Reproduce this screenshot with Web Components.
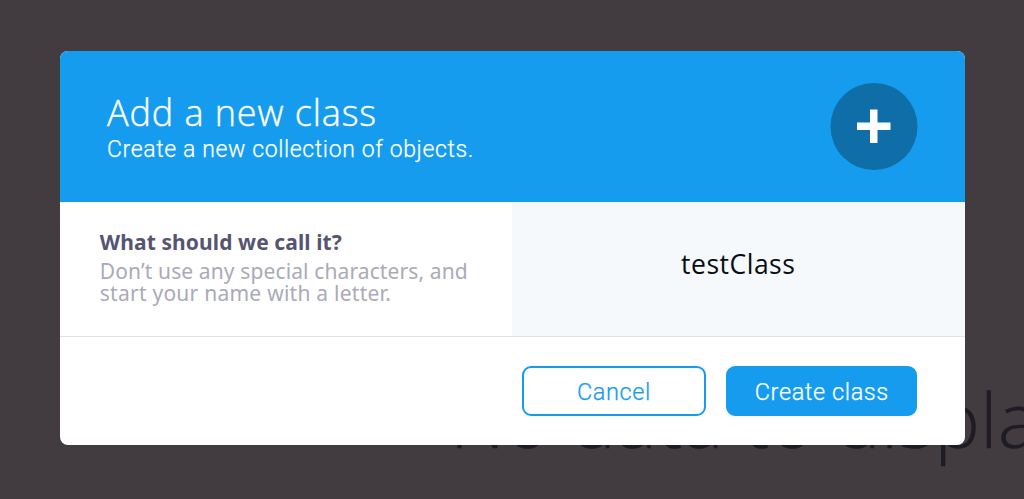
<!DOCTYPE html>
<html lang="en">
<head>
<meta charset="utf-8">
<title>Add a new class</title>
<style>
    body {
        margin: 0;
        height: 499px;
        overflow: hidden;
        background: #423c40;
        font-family: "Open Sans", "Noto Sans", sans-serif;
    }
</style>
</head>
<body>
<modal-backdrop>
    <empty-message slot="behind">No data to display</empty-message>
    <class-modal>
        <modal-header slot="header">
            <span slot="title">Add a new class</span>
            <span slot="subtitle">Create a new collection of objects.</span>
            <plus-badge slot="icon"></plus-badge>
        </modal-header>
        <modal-field>
            <span slot="label">What should we call it?</span>
            <span slot="description">Don’t use any special characters, and</span>
            <span slot="rule">start your name with a letter.</span>
            <span slot="value">testClass</span>
        </modal-field>
        <modal-button slot="actions" style="width: 184px">Cancel</modal-button>
        <modal-button slot="actions" primary style="width: 191px">Create class</modal-button>
    </class-modal>
</modal-backdrop>

<script>
class ModalBackdrop extends HTMLElement {
    connectedCallback() {
        this.attachShadow({mode: 'open'});
        this.shadowRoot.innerHTML = /*html*/`
            <style>
                :host {
                    display: block;
                    position: relative;
                    box-sizing: border-box;
                    height: 499px;
                    padding: 51px 59.5px 0;
                    overflow: hidden;
                }
            </style>
            <slot name="behind"></slot>
            <slot></slot>
        `;
    }
}

class EmptyMessage extends HTMLElement {
    connectedCallback() {
        this.attachShadow({mode: 'open'});
        this.shadowRoot.innerHTML = /*html*/`
            <style>
                /* page text that shows from under the modal */
                :host {
                    position: absolute;
                    left: 450px;
                    top: 371px;
                    font-size: 76px;
                    line-height: 96px;
                    font-weight: 300;
                    letter-spacing: 0.5px;
                    white-space: nowrap;
                    color: #1f1b24;
                    -webkit-text-stroke: 0.5px #1f1b24;
                }
            </style>
            <slot></slot>
        `;
    }
}

class ClassModal extends HTMLElement {
    connectedCallback() {
        this.attachShadow({mode: 'open'});
        this.shadowRoot.innerHTML = /*html*/`
            <style>
                :host {
                    display: flex;
                    flex-direction: column;
                    position: relative;
                    height: 393.5px;
                    border-radius: 8px;
                    overflow: hidden;
                    background: #fff;
                }

                footer {
                    flex: 1;
                    display: flex;
                    justify-content: flex-end;
                    align-items: center;
                    gap: 20.4px;
                    padding: 0 47.2px 0 0;
                }
            </style>
            <slot name="header"></slot>
            <slot></slot>
            <footer><slot name="actions"></slot></footer>
        `;
    }
}

class ModalHeader extends HTMLElement {
    connectedCallback() {
        this.attachShadow({mode: 'open'});
        this.shadowRoot.innerHTML = /*html*/`
            <style>
                :host {
                    display: flex;
                    justify-content: space-between;
                    align-items: center;
                    box-sizing: border-box;
                    height: 150.5px;
                    padding: 0 47px 0 47.5px;
                    background: #169cee;
                    color: #fff;
                    white-space: nowrap;
                }

                #title {
                    padding-top: 2px;
                    font-size: 36px;
                    line-height: 44px;
                    font-weight: 300;
                    letter-spacing: 0.9px;
                    -webkit-text-stroke: 0.4px #fff;
                }

                #subtitle {
                    padding-top: 1px;
                    font-family: Roboto, sans-serif;
                    font-size: 23px;
                    line-height: 28px;
                    font-weight: 300;
                    letter-spacing: 0.63px;
                    -webkit-text-stroke: 0.25px #fff;
                }
            </style>
            <div>
                <div id="title"><slot name="title"></slot></div>
                <div id="subtitle"><slot name="subtitle"></slot></div>
            </div>
            <slot name="icon"></slot>
        `;
    }
}

class PlusBadge extends HTMLElement {
    connectedCallback() {
        this.attachShadow({mode: 'open'});
        this.shadowRoot.innerHTML = /*html*/`
            <style>
                :host {
                    display: block;
                    width: 88px;
                    height: 87px;
                }

                svg {
                    display: block;
                }
            </style>
            <svg width="88" height="87" viewBox="0 0 88 87">
                <circle cx="44" cy="43.5" r="43.5" fill="#0f6da8"/>
                <path d="M40 26.5h7.5v13h13v7.5h-13v13H40v-13H27v-7.5h13z" fill="#fff"/>
            </svg>
        `;
    }
}

class ModalField extends HTMLElement {
    connectedCallback() {
        this.attachShadow({mode: 'open'});
        this.shadowRoot.innerHTML = /*html*/`
            <style>
                :host {
                    display: grid;
                    grid-template-columns: 1fr 1fr;
                    box-sizing: border-box;
                    height: 135.5px;
                    border-bottom: 1px solid #e1e1e3;
                    white-space: nowrap;
                }

                #text {
                    padding: 26px 0 0 40.3px;
                    font-family: "Noto Sans", sans-serif;
                    font-size: 21px;
                }

                #label {
                    line-height: 28px;
                    font-weight: 700;
                    letter-spacing: 0.1px;
                    color: #555572;
                }

                #description,
                #rule {
                    line-height: 22px;
                    letter-spacing: 0.12px;
                    color: #aaaab8;
                }

                #description {
                    padding-top: 4px;
                }

                #rule {
                    letter-spacing: 0.25px;
                }

                #value {
                    display: flex;
                    align-items: center;
                    justify-content: center;
                    padding-bottom: 9px;
                    background: #f5f9fb;
                    font-size: 26.5px;
                    letter-spacing: 0.5px;
                    color: #0b0c13;
                }
            </style>
            <div id="text">
                <div id="label"><slot name="label"></slot></div>
                <div id="description"><slot name="description"></slot></div>
                <div id="rule"><slot name="rule"></slot></div>
            </div>
            <div id="value"><slot name="value"></slot></div>
        `;
    }
}

class ModalButton extends HTMLElement {
    connectedCallback() {
        this.attachShadow({mode: 'open'});
        this.shadowRoot.innerHTML = /*html*/`
            <style>
                :host {
                    display: flex;
                    align-items: center;
                    justify-content: center;
                    box-sizing: border-box;
                    height: 50px;
                    padding-top: 2px;
                    border: 2px solid #169cee;
                    border-radius: 9px;
                    font-family: Roboto, sans-serif;
                    font-size: 23.5px;
                    font-weight: 300;
                    letter-spacing: 0.6px;
                    white-space: nowrap;
                    color: #169cee;
                    -webkit-text-stroke: 0.25px currentColor;
                }

                :host([primary]) {
                    background: #169cee;
                    color: #fff;
                }
            </style>
            <slot></slot>
        `;
    }
}

customElements.define('modal-backdrop', ModalBackdrop);
customElements.define('empty-message', EmptyMessage);
customElements.define('class-modal', ClassModal);
customElements.define('modal-header', ModalHeader);
customElements.define('plus-badge', PlusBadge);
customElements.define('modal-field', ModalField);
customElements.define('modal-button', ModalButton);
</script>
</body>
</html>
